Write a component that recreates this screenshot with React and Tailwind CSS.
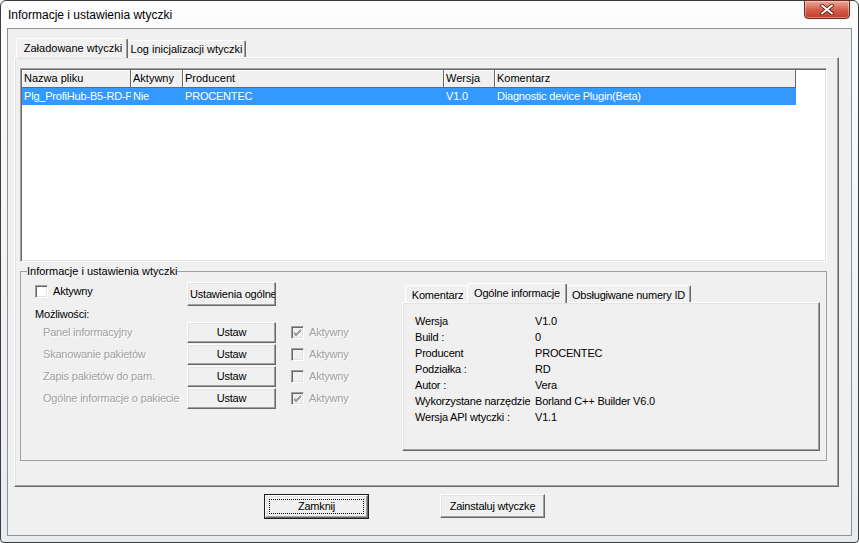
const raised = "border border-t-white border-l-white border-r-[#696969] border-b-[#696969] shadow-[inset_-1px_-1px_0_#a0a0a0,inset_1px_1px_0_#e3e3e3]";
const sunken = "border border-t-[#a0a0a0] border-l-[#a0a0a0] border-r-white border-b-white shadow-[inset_1px_1px_0_#696969,inset_-1px_-1px_0_#e3e3e3]";

function Btn({ children, className = "" }) {
  return (
    <div className={`${raised} bg-[#f0f0f0] flex items-center justify-center whitespace-nowrap overflow-hidden ${className}`}>
      {children}
    </div>
  );
}

function Check({ checked, disabled }) {
  return (
    <div className={`w-[13px] h-[13px] shrink-0 ${sunken} ${disabled ? "bg-[#f0f0f0]" : "bg-white"} flex items-center justify-center`}>
      {checked && (
        <svg width="9" height="9" viewBox="0 0 9 9">
          <path d="M1 4 L3 6 L8 1 M1 5 L3 7 L8 2 M1 6 L3 8 L8 3" stroke={disabled ? "#a0a0a0" : "#000"} strokeWidth="1" fill="none" />
        </svg>
      )}
    </div>
  );
}

const cols = [
  ["Nazwa pliku", 109, "Plg_ProfiHub-B5-RD-P"],
  ["Aktywny", 52, "Nie"],
  ["Producent", 261, "PROCENTEC"],
  ["Wersja", 51, "V1.0"],
  ["Komentarz", 301, "Diagnostic device Plugin(Beta)"],
];

const caps = [
  ["Panel informacyjny", true],
  ["Skanowanie pakietów", false],
  ["Zapis pakietów do pam.", false],
  ["Ogólne informacje o pakiecie", true],
];

const info = [
  ["Wersja", "V1.0"],
  ["Build :", "0"],
  ["Producent", "PROCENTEC"],
  ["Podziałka :", "RD"],
  ["Autor :", "Vera"],
  ["Wykorzystane narzędzie", "Borland C++ Builder V6.0"],
  ["Wersja API wtyczki :", "V1.1"],
];

const dis = "text-[#a0a0a0] [text-shadow:1px_1px_0_#ffffff]";

export default function App() {
  return (
    <div className="w-[859px] h-[543px] overflow-hidden bg-white font-['Liberation_Sans',Arial,sans-serif] text-[11px] leading-[13px] text-black">
      <div className="w-[859px] h-[543px] flex flex-col rounded-t-[6px] rounded-b-[4px] border border-[#3a3d42] bg-gradient-to-b from-[#fdfdfe] via-[#f1f3f5] to-[#e9ecef]">
        {/* Title bar */}
        <div className="h-[27px] flex justify-between shrink-0">
          <div className="self-center pl-[7px] pt-[1px] text-[12px] leading-[15px] text-black">Informacje i ustawienia wtyczki</div>
          <div className="mr-[8px] -mt-[1px] w-[46px] h-[19px] rounded-b-[4px] border border-[#70291f] bg-gradient-to-b from-[#eaa99c] via-[#d4604f] to-[#c23c28] shadow-[inset_0_0_0_1px_rgba(255,255,255,0.35)] flex items-center justify-center">
            <svg width="14" height="11" viewBox="0 0 14 11">
              <path d="M2 1.5 L12 9.5 M12 1.5 L2 9.5" stroke="#5a1c14" strokeWidth="3.6" strokeLinecap="round" />
              <path d="M2 1.5 L12 9.5 M12 1.5 L2 9.5" stroke="#ffffff" strokeWidth="2" strokeLinecap="round" />
            </svg>
          </div>
        </div>

        {/* Client area */}
        <div className="mx-[6px] h-[508px] shrink-0 border border-[#8e9196] bg-[#f0f0f0] flex flex-col">
          {/* Main tab control */}
          <div className="ml-[6px] mt-[9px] w-[825px]">
            <div className="h-[19px] flex items-end pl-[2px]">
              <div className="relative z-10 h-[20px] -mb-[1px] w-[112px] bg-[#f0f0f0] border-l border-t border-r border-l-white border-t-white border-r-[#696969] rounded-t-[2px] shadow-[inset_-1px_0_0_#a0a0a0] flex justify-center pt-[3px] pl-[2px]">
                Załadowane wtyczki
              </div>
              <div className="h-[17px] w-[118px] bg-[#f0f0f0] border-t border-r border-t-white border-r-[#696969] rounded-t-[2px] shadow-[inset_-1px_0_0_#a0a0a0] flex justify-center pt-[2px]">
                Log inicjalizacji wtyczki
              </div>
            </div>
            <div className={`h-[430px] ${raised} bg-[#f0f0f0] pl-[5px] pt-[10px]`}>
              {/* List view */}
              <div className={`w-[807px] h-[194px] ${sunken} bg-white p-[1px] overflow-hidden`}>
                <div className="flex">
                  {cols.map(([h, w]) => (
                    <div key={h} style={{ width: w }} className="h-[18px] shrink-0 bg-[#f0f0f0] border-r border-b border-r-[#696969] border-b-[#696969] shadow-[inset_1px_1px_0_#ffffff] pl-[2px] pt-[2px] whitespace-nowrap overflow-hidden">
                      {h}
                    </div>
                  ))}
                </div>
                <div className="flex">
                  {cols.map(([h, w, v]) => (
                    <div key={h} style={{ width: w }} className="h-[17px] shrink-0 bg-[#3399ff] text-white pl-[2px] pt-[2px] whitespace-nowrap overflow-hidden tracking-[-0.2px]">
                      {v}
                    </div>
                  ))}
                </div>
              </div>

              {/* Group box */}
              <fieldset className="mt-[3px] w-[807px] h-[196px] border border-[#a0a0a0] p-0 m-0 min-w-0 tracking-[-0.2px]">
                <legend className="ml-[6px] px-0 leading-[13px] tracking-normal">Informacje i ustawienia wtyczki</legend>
                <div className="flex">
                  {/* Left block */}
                  <div className="w-[380px] pl-[14px] pt-[4px]">
                    <div className="flex h-[24px]">
                      <div className="w-[152px] flex items-start pt-[3px]">
                        <Check />
                        <span className="ml-[5px]">Aktywny</span>
                      </div>
                      <Btn className="w-[89px] h-[24px] !justify-start pl-[2px]">Ustawienia ogólne</Btn>
                    </div>
                    <div className="h-[16px] flex items-center pt-[1px]">Możliwości:</div>
                    {caps.map(([label, chk]) => (
                      <div key={label} className="flex h-[22px]">
                        <div className={`w-[152px] pl-[8px] h-[21px] flex items-center whitespace-nowrap ${dis}`}>{label}</div>
                        <Btn className="w-[89px] h-[21px]">Ustaw</Btn>
                        <div className="ml-[15px] h-[21px] flex items-center">
                          <Check checked={chk} disabled />
                          <span className={`ml-[5px] ${dis}`}>Aktywny</span>
                        </div>
                      </div>
                    ))}
                  </div>

                  {/* Right block: inner tab control */}
                  <div className="w-[419px] pt-[5px] pl-[1px]">
                    <div className="h-[19px] flex items-end pl-[3px]">
                      <div className="h-[17px] w-[62px] border-l border-t border-l-white border-t-white rounded-t-[2px] flex justify-center pt-[3px] pl-[2px]">Komentarz</div>
                      <div className="relative z-10 h-[20px] -mb-[1px] w-[100px] bg-[#f0f0f0] border-l border-t border-r border-l-white border-t-white border-r-[#696969] rounded-t-[2px] shadow-[inset_-1px_0_0_#a0a0a0] flex justify-center pt-[3px]">Ogólne informacje</div>
                      <div className="h-[17px] w-[124px] border-t border-r border-t-white border-r-[#696969] rounded-t-[2px] shadow-[inset_-1px_0_0_#a0a0a0] flex justify-center pt-[3px]">Obsługiwane numery ID</div>
                    </div>
                    <div className={`w-[418px] h-[149px] ${raised} bg-[#f0f0f0] pl-[12px] pt-[10px]`}>
                      {info.map(([k, v]) => (
                        <div key={k} className="flex h-[16px] items-center">
                          <div className="w-[120px] whitespace-nowrap">{k}</div>
                          <div className="whitespace-nowrap">{v}</div>
                        </div>
                      ))}
                    </div>
                  </div>
                </div>
              </fieldset>
            </div>
          </div>

          {/* Bottom buttons */}
          <div className="flex mt-[7px] ml-[256px] tracking-[-0.2px]">
            <div className="w-[105px] h-[25px] border border-[#1e1e1e]">
              <div className={`w-full h-full ${raised} bg-[#f0f0f0] p-[3px]`}>
                <div className="w-full h-full border border-dotted border-black flex items-center justify-center">Zamknij</div>
              </div>
            </div>
            <Btn className="ml-[71px] w-[105px] h-[24px]">Zainstaluj wtyczkę</Btn>
          </div>
        </div>
      </div>
    </div>
  );
}
